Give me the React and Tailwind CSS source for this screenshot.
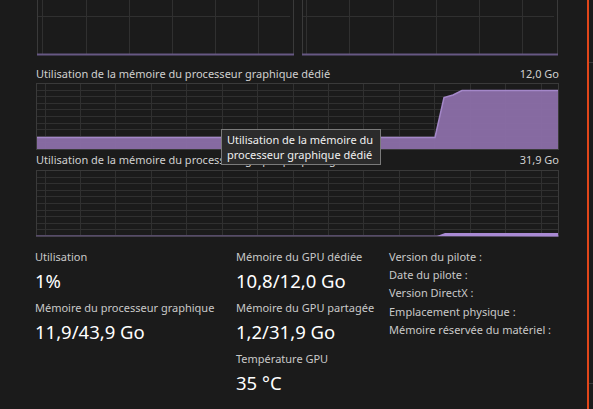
const GRID = '#303030'
const BORDER = '#3a3a3a'

function TopChart({ width, lines }) {
  return (
    <svg width={width} height={56} className="block">
      <line x1={0.5} y1={0} x2={0.5} y2={55} stroke={BORDER} />
      <line x1={width - 0.5} y1={0} x2={width - 0.5} y2={55} stroke={BORDER} />
      {lines.map(x => (
        <line key={x} x1={x + 0.5} y1={0} x2={x + 0.5} y2={54} stroke={GRID} />
      ))}
      <line x1={1} y1={16.5} x2={width - 4} y2={16.5} stroke={GRID} />
      <rect x={0} y={53.5} width={width} height={2} fill="#675883" />
    </svg>
  )
}

function Grid({ W, H }) {
  const cols = []
  for (let k = 0; k < 15; k++) cols.push(Math.floor(9 + 35.43 * k) + 0.5)
  const rows = []
  for (let k = 1; k < 10; k++) rows.push(Math.round(6.6 * k) + 0.5)
  return (
    <>
      {cols.map(x => (
        <line key={'c' + x} x1={x} y1={0} x2={x} y2={H} stroke={GRID} />
      ))}
      {rows.map(y => (
        <line key={'r' + y} x1={0} y1={y} x2={W} y2={y} stroke={GRID} />
      ))}
      <rect x={0.5} y={0.5} width={W - 1} height={H - 1} fill="none" stroke={BORDER} />
    </>
  )
}

function DedicatedChart() {
  const W = 523, H = 67
  return (
    <svg width={W} height={H} className="block">
      <Grid W={W} H={H} />
      <polygon
        points={`1,54 399,54 408,14.5 417,12 426,7 522,7 522,66 1,66`}
        fill="#8a6da6"
        fillOpacity="0.97"
      />
      <polyline
        points={`1,54.5 399,54.5 408,14.5 417,12 426,7.5 522,7.5`}
        fill="none"
        stroke="#a487c9"
        strokeWidth="1.5"
      />
    </svg>
  )
}

function SharedChart() {
  const W = 523, H = 67
  return (
    <svg width={W} height={H} className="block">
      <Grid W={W} H={H} />
      <rect x={0} y={65} width={W} height={1.5} fill="#564b68" />
      <polygon points="401,66 409,63 522,63 522,66.5" fill="#a98ad4" />
    </svg>
  )
}

function Stat({ label, value }) {
  return (
    <div>
      <div className="h-4 whitespace-nowrap text-[11px] leading-4 text-[#c9c9c9]">{label}</div>
      <div className="mt-1 h-6 whitespace-nowrap text-[18.5px] leading-6 text-white">{value}</div>
    </div>
  )
}

const infos = [
  'Version du pilote :',
  'Date du pilote :',
  'Version DirectX :',
  'Emplacement physique :',
  'Mémoire réservée du matériel :',
]

export default function App() {
  return (
    <div className="flex h-[409px] w-[593px] overflow-hidden bg-[#1b1b1b] font-['Segoe_UI','Noto_Sans',sans-serif]">
      <div className="relative w-[587px] shrink-0 pl-[36px] pr-[28px]">
        <div className="flex h-[56px] gap-[8px] pl-px">
          <TopChart width={257} lines={[5, 49, 92, 135, 178, 221]} />
          <TopChart width={256} lines={[4, 47, 91, 134, 177, 220]} />
        </div>

        <div className="mt-[10px] flex h-[17px] justify-between text-[11px] leading-4 text-[#d0d0d0]">
          <span>Utilisation de la mémoire du processeur graphique dédié</span>
          <span>12,0 Go</span>
        </div>
        <DedicatedChart />

        <div className="mt-[2px] flex h-[18px] justify-between text-[11px] leading-4 text-[#d0d0d0]">
          <span>Utilisation de la mémoire du processeur graphique partagé</span>
          <span>31,9 Go</span>
        </div>
        <SharedChart />

        <div className="-ml-px mt-[12px] grid grid-cols-[201px_153px_1fr]">
          <div className="flex flex-col gap-[7px]">
            <Stat label="Utilisation" value="1%" />
            <Stat label="Mémoire du processeur graphique" value="11,9/43,9 Go" />
          </div>
          <div className="flex flex-col gap-[7px]">
            <Stat label="Mémoire du GPU dédiée" value="10,8/12,0 Go" />
            <Stat label="Mémoire du GPU partagée" value="1,2/31,9 Go" />
            <Stat label="Température GPU" value="35 °C" />
          </div>
          <div className="-mt-px flex flex-col">
            {infos.map(t => (
              <div key={t} className="h-[18.2px] whitespace-nowrap text-[11px] leading-[18px] text-[#c9c9c9]">
                {t}
              </div>
            ))}
          </div>
        </div>

        <div className="absolute left-[221px] top-[129px] w-[160px] whitespace-nowrap border border-[#7a7a7a] bg-[#2b2b2b] px-[5px] py-[2px] text-[11px] leading-[15px] text-[#f0f0f0]">
          Utilisation de la mémoire du
          <br />
          processeur graphique dédié
        </div>
      </div>
      <div className="w-[2px] shrink-0 bg-[#e2461a]" />
      <div className="flex-1">
        <div className="mt-[62px] h-px bg-[#3a3a3a]" />
        <div className="mt-[320px] h-px bg-[#3a3a3a]" />
      </div>
    </div>
  )
}
